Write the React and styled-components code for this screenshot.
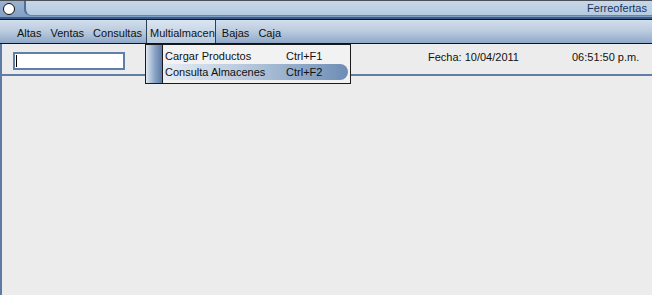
import React from 'react';
import styled, { createGlobalStyle, css } from 'styled-components';

const Global = createGlobalStyle`
  html, body { margin: 0; padding: 0; background: #ececec; }
  body { font-family: "Liberation Sans", Arial, sans-serif; }
`;

const menuItems = ['Altas', 'Ventas', 'Consultas', 'Multialmacen', 'Bajas', 'Caja'];

const dropItems = [
  { label: 'Cargar Productos', key: 'Ctrl+F1' },
  { label: 'Consulta Almacenes', key: 'Ctrl+F2', active: true },
];

const App = () => (
  <>
    <Global />
    <Window>
      <TitleBar>
        <CloseDot />
        <TitlePanel>
          <Title>Ferreofertas</Title>
        </TitlePanel>
      </TitleBar>
      <MenuBar>
        {menuItems.map((item) => (
          <MenuItem key={item} open={item === 'Multialmacen'}>
            {item}
            {item === 'Multialmacen' && (
              <Dropdown>
                <Stripe />
                <DropList>
                  {dropItems.map((d) => (
                    <DropItem key={d.label} active={d.active}>
                      <span>{d.label}</span>
                      <Shortcut>{d.key}</Shortcut>
                    </DropItem>
                  ))}
                </DropList>
              </Dropdown>
            )}
          </MenuItem>
        ))}
      </MenuBar>
      <ToolRow>
        <TextBox>
          <Caret />
        </TextBox>
        <Info>Fecha: 10/04/2011</Info>
        <Clock>06:51:50 p.m.</Clock>
      </ToolRow>
      <Body />
    </Window>
  </>
);

const Window = styled.div`
  width: 652px;
  height: 295px;
  display: flex;
  flex-direction: column;
  background: #ececec;
  overflow: hidden;
  font-size: 11px;
  color: #111;
`;

const TitleBar = styled.div`
  height: 18px;
  flex-shrink: 0;
  display: flex;
  border-top: 1px solid #4a4f58;
  border-bottom: 1px solid #0c1420;
  background: linear-gradient(#9bb3d0, #7e9cc2);
  position: relative;
  &:after {
    content: '';
    position: absolute;
    left: 0;
    right: 0;
    bottom: 0;
    height: 2px;
    background: #3a5d8e;
  }
`;

const CloseDot = styled.div`
  width: 10px;
  height: 10px;
  margin: 2px 0 0 3px;
  border: 1px solid #111;
  border-radius: 50%;
  background: #fff;
`;

const TitlePanel = styled.div`
  flex: 1;
  margin: 0 0 3px 9px;
  border-left: 2px solid #4c6e9c;
  border-bottom: 1px solid #6684ac;
  border-bottom-left-radius: 7px;
  background: linear-gradient(#c8d7e8, #b6cae0);
  display: flex;
  justify-content: flex-end;
  align-items: center;
  padding-right: 5px;
`;

const Title = styled.span`
  color: #17365e;
  font-size: 11px;
  line-height: 12px;
`;

const MenuBar = styled.div`
  height: 23px;
  flex-shrink: 0;
  display: flex;
  align-items: stretch;
  padding-left: 12px;
  border-bottom: 1px solid #0c1420;
  background: linear-gradient(#d2deeb 0%, #bccde0 45%, #8fa9c9 100%);
`;

const MenuItem = styled.div`
  position: relative;
  display: flex;
  align-items: center;
  padding: 2px 4px 0 5px;
  white-space: nowrap;
  ${(p) =>
    p.open &&
    css`
      padding: 2px 0 0 3px;
      margin-right: 1px;
      border-left: 1px solid #2e3f58;
      border-right: 1px solid #2e3f58;
      background: linear-gradient(#dbe5f0, #b7c9de);
    `}
`;

const Dropdown = styled.div`
  position: absolute;
  top: 24px;
  left: -2px;
  width: 204px;
  height: 38px;
  display: flex;
  background: #f2f2f2;
  border: 1px solid #1a1a1a;
  z-index: 5;
`;

const Stripe = styled.div`
  width: 16px;
  border-right: 1px solid #1a1a1a;
  background: linear-gradient(90deg, #dfe7f1, #8aa4c6 55%, #5b7aa4);
`;

const DropList = styled.div`
  flex: 1;
  display: flex;
  flex-direction: column;
  padding-top: 3px;
`;

const DropItem = styled.div`
  height: 16px;
  display: flex;
  align-items: center;
  padding-left: 2px;
  margin-right: 2px;
  border-radius: 0 8px 8px 0;
  color: #111;
  ${(p) =>
    p.active &&
    css`
      background: linear-gradient(90deg, #e6edf5 0%, #b6c8dd 45%, #6e8db5 100%);
    `}
`;

const Shortcut = styled.span`
  margin-left: auto;
  width: 62px;
`;

const ToolRow = styled.div`
  height: 30px;
  flex-shrink: 0;
  display: flex;
  align-items: flex-start;
  white-space: nowrap;
  border-left: 2px solid #5c7ca6;
  border-bottom: 2px solid #5f7fa8;
`;

const TextBox = styled.div`
  width: 108px;
  height: 14px;
  margin: 8px 0 0 11px;
  border: 2px solid #5f7fa8;
  background: #fff;
  position: relative;
`;

const Caret = styled.div`
  position: absolute;
  left: 1px;
  top: 1px;
  width: 1px;
  height: 12px;
  background: #000;
`;

const Info = styled.span`
  width: 144px;
  margin: 7px 0 0 303px;
`;

const Clock = styled.span`
  margin-top: 7px;
`;

const Body = styled.div`
  flex: 1;
  border-left: 2px solid #5c7ca6;
  background: #ececec;
`;

export default App;
